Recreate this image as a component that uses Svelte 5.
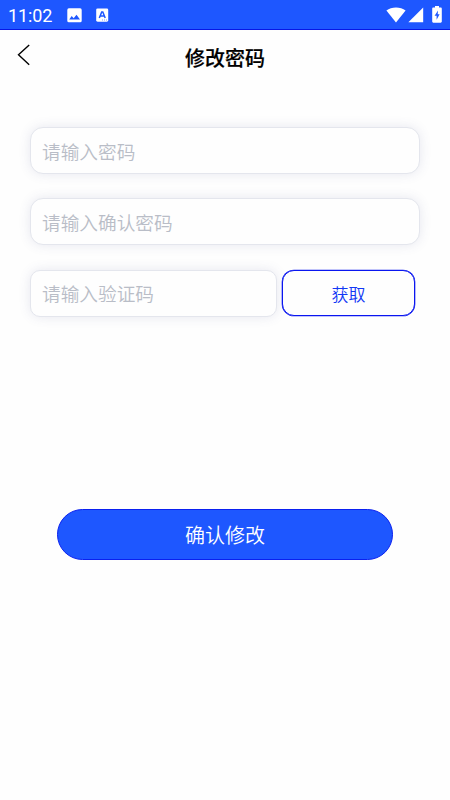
<script>
  let password = $state('');
  let confirmation = $state('');
  let code = $state('');
</script>

<div class="screen">
  <div class="status">
    <span class="time">11:02</span>
    <svg class="photo" width="15" height="15" viewBox="0 0 15 15">
      <rect x="0.3" y="0.3" width="14.4" height="14" rx="1.6" fill="#fff" />
      <path d="M2.2 11.4 4.7 8.1l2 2.2 2.8-3.5 3.5 4.6z" fill="#1e57ff" />
    </svg>
    <svg class="lang" width="13" height="15" viewBox="0 0 13 15">
      <rect x="0.2" y="0.4" width="12" height="13.3" rx="1.4" fill="#fff" />
      <path d="M3.3 10 5.7 3.9h1.1L9.2 10M4.2 7.9h4" fill="none" stroke="#1e57ff" stroke-width="1.5" />
      <path d="M6.2 12h.8M8.2 12h.8M10.2 12h.8" stroke="#1e57ff" stroke-width="0.7" />
    </svg>
    <span class="spacer"></span>
    <svg class="wifi" width="20" height="16" viewBox="0 0 20 16">
      <path d="M10 15.4.4 3.6C3 1.6 6.3.5 10 .5s7 1.1 9.6 3.1z" fill="#fff" />
    </svg>
    <svg class="signal" width="16" height="16" viewBox="0 0 16 16">
      <path d="M15.2.5v14.8H.4z" fill="#fff" />
    </svg>
    <svg class="battery" width="10" height="17" viewBox="0 0 10 17">
      <path d="M3 0h4v1.6h1.7c.6 0 1.1.5 1.1 1.1v12.9c0 .6-.5 1.1-1.1 1.1H1.3c-.6 0-1.1-.5-1.1-1.1V2.7c0-.6.5-1.1 1.1-1.1H3z" fill="#fff" />
      <path d="M6 4.6 2.6 9.7h2v4L7.6 8.3H5.7z" fill="#1e57ff" />
    </svg>
  </div>

  <header>
    <button class="back" aria-label="返回">
      <svg width="14" height="22" viewBox="0 0 14 22">
        <path d="M12.2.9 1.5 10.8l10.7 10" fill="none" stroke="#000" stroke-width="1.4" />
      </svg>
    </button>
    <h1>修改密码</h1>
  </header>

  <form>
    <input type="password" placeholder="请输入密码" bind:value={password} />
    <input type="password" placeholder="请输入确认密码" bind:value={confirmation} />
    <div class="row">
      <input class="code" placeholder="请输入验证码" bind:value={code} />
      <button class="get" type="button">获取</button>
    </div>
    <button class="submit" type="button">确认修改</button>
  </form>
</div>

<style>
  :global(body) {
    margin: 0;
    background: #fefefe;
  }
  .screen {
    width: 450px;
    height: 800px;
    overflow: hidden;
    background: #fefefe;
    font-family: "Noto Sans CJK SC", sans-serif;
  }
  .screen * {
    box-sizing: border-box;
  }
  .status {
    display: flex;
    align-items: center;
    height: 30px;
    padding: 1px 8px 0;
    background: #1e57ff;
    border-bottom: 1px solid #0716e6;
  }
  .status svg {
    flex: none;
  }
  .battery {
    margin-top: -2px;
  }
  .time {
    width: 59px;
    padding-top: 1px;
    color: #fff;
    font: 18px/20px Roboto, sans-serif;
    letter-spacing: -0.1px;
  }
  .lang {
    margin-left: 14px;
  }
  .spacer {
    flex: 1;
  }
  .wifi {
    margin-right: 2px;
  }
  .signal {
    margin-right: 8px;
  }
  header {
    display: grid;
    grid-template-columns: 60px 1fr 60px;
    align-items: center;
    height: 53px;
  }
  button {
    margin: 0;
    padding: 0;
    font-family: inherit;
    cursor: pointer;
  }
  .back {
    display: flex;
    width: 40px;
    height: 40px;
    padding: 7px 0 0 17px;
    border: 0;
    background: none;
  }
  h1 {
    margin: 0;
    padding-top: 2px;
    color: #000;
    font-size: 20px;
    font-weight: 500;
    line-height: 30px;
    text-align: center;
    -webkit-text-stroke: 0.2px #000;
  }
  form {
    display: flex;
    flex-direction: column;
    gap: 24px;
    padding: 44px 30px 0;
  }
  input {
    width: 100%;
    height: 47px;
    margin: 0;
    padding: 0 11px;
    border: 1px solid #e4e6ed;
    border-radius: 13px;
    outline: none;
    background: #fefefe;
    box-shadow: 0 0 12px rgba(70, 80, 140, 0.13);
    color: #222;
    font-family: inherit;
    font-size: 18.67px;
    font-weight: 350;
  }
  input::placeholder {
    color: #b9bdc7;
    opacity: 1;
  }
  .row {
    display: flex;
    gap: 5px;
    padding-top: 1px;
  }
  .code {
    width: 247px;
    padding-bottom: 2px;
    border-radius: 10px;
  }
  .get {
    width: 133px;
    height: 46px;
    border: 1px solid #0a16f0;
    border-radius: 12px;
    background: #fefefe;
    box-shadow: 0 0 0 0.3px #0a16f0;
    color: #1238f5;
    font-size: 17px;
    font-weight: 350;
  }
  .submit {
    width: 336px;
    height: 51px;
    margin: 168px 0 0 27px;
    border: 1px solid #0a20f0;
    border-radius: 26px;
    background: #1e57ff;
    color: #fff;
    font-size: 20px;
    font-weight: 350;
  }
</style>
